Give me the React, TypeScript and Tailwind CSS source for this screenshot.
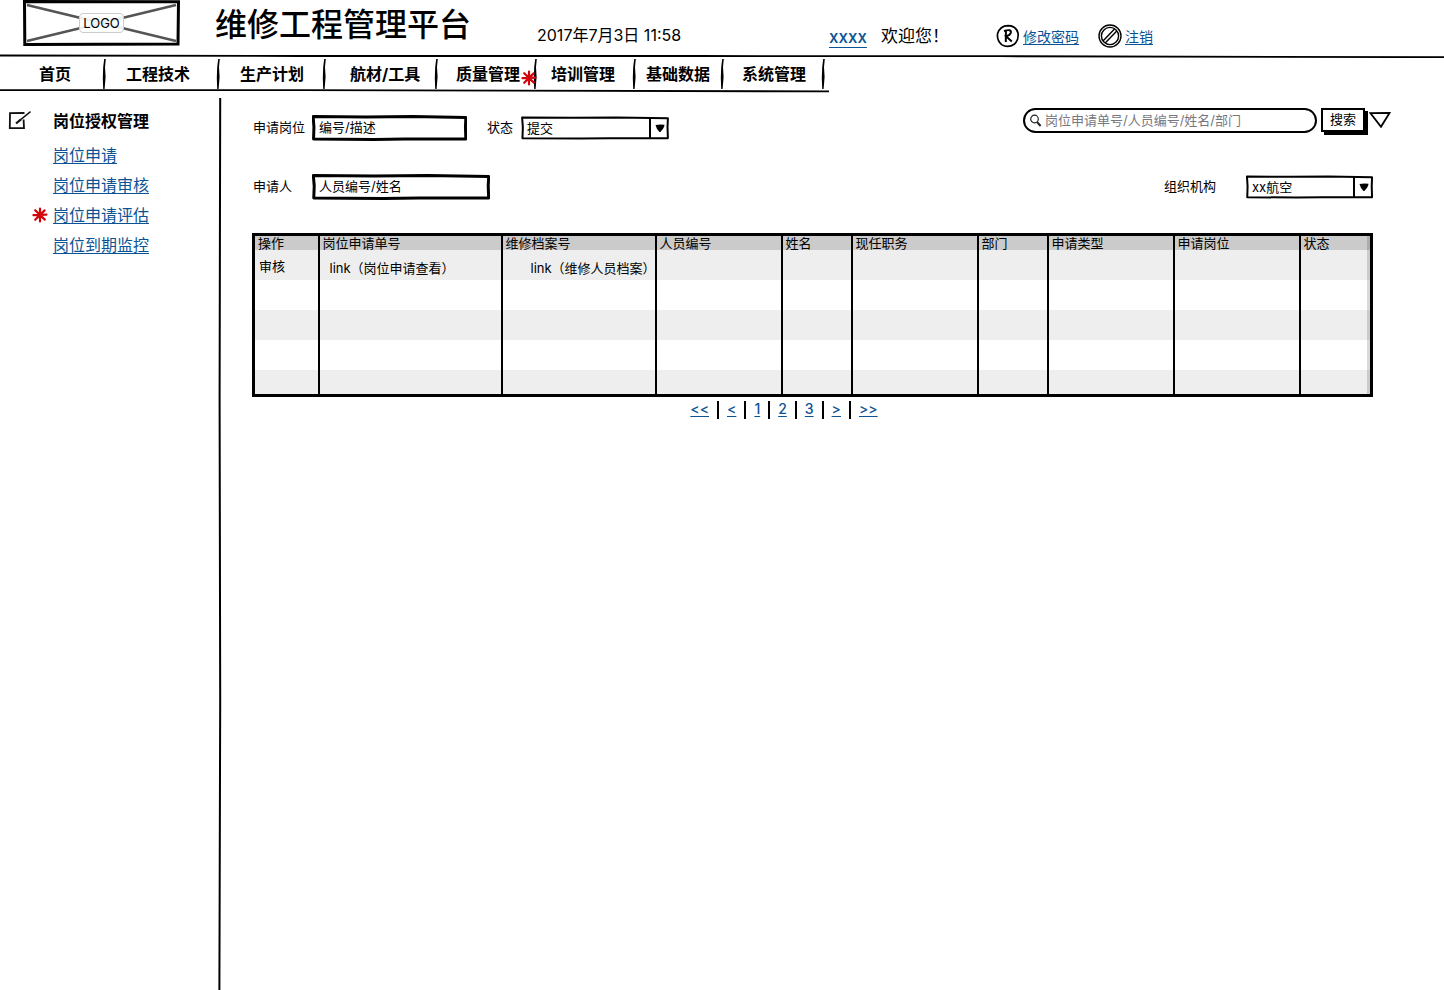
import React from "react";

const font = "font-['Inter','Noto_Sans_CJK_SC',sans-serif]";

function SketchFrame({ weight = 3 }: { weight?: number }) {
  return (
    <svg
      aria-hidden="true"
      className="pointer-events-none absolute inset-0 h-full w-full"
      viewBox="0 0 200 26"
      preserveAspectRatio="none"
      fill="none"
      stroke="#000"
      strokeWidth={weight}
      strokeLinejoin="round"
    >
      <path
        vectorEffect="non-scaling-stroke"
        d="M1.5 1.5 L70 2 L130 1.5 L198.5 2.5 L198 12 L198.5 24 L120 24 L80 24.5 L2 24 L2.5 12 Z"
      />
    </svg>
  );
}

function NavDivider() {
  return (
    <svg aria-hidden="true" className="h-8 w-1 shrink-0" viewBox="0 0 4 32">
      <path d="M2.2 1 L3.8 1 L3 9 L3.6 19 L2.6 31 L1.2 31 L0.8 20 L1.2 9 Z" fill="#000" />
    </svg>
  );
}

function Asterisk() {
  return (
    <svg
      aria-hidden="true"
      className="h-4 w-4"
      viewBox="0 0 16 16"
      stroke="#d0060c"
      strokeWidth="2.2"
      strokeLinecap="round"
    >
      <path d="M8 1.5 L8 14.5 M1.5 8.2 L14.5 7.6 M3.2 3.2 L12.8 12.6 M12.6 3.4 L3.2 12.8" />
    </svg>
  );
}

function Caret() {
  return (
    <svg aria-hidden="true" className="h-2 w-2.5" viewBox="0 0 10 8">
      <path d="M0.5 1 Q5 0 9.5 0.8 Q9.6 3.5 5.4 8 L4.4 8 Q1.4 5 0.5 1 Z" fill="#000" />
    </svg>
  );
}

const navItems = [
  { label: "首页", box: "w-[102px] pl-[39px]" },
  { label: "工程技术", box: "w-[110px] pl-5" },
  { label: "生产计划", box: "w-[102px] pl-5" },
  { label: "航材/工具", box: "w-[108px] pl-6" },
  { label: "质量管理", box: "w-[95px] pl-[18px]", flagged: true },
  { label: "培训管理", box: "w-[95px] pl-[14px]" },
  { label: "基础数据", box: "w-[84px] pl-[10px]" },
  { label: "系统管理", box: "w-[97px] pl-[18px]" },
];

const sideLinks = [
  { label: "岗位申请" },
  { label: "岗位申请审核" },
  { label: "岗位申请评估", flagged: true },
  { label: "岗位到期监控" },
];

const columns = [
  { label: "操作", width: "w-[65px]" },
  { label: "岗位申请单号", width: "w-[183px]" },
  { label: "维修档案号", width: "w-[154px]" },
  { label: "人员编号", width: "w-[126px]" },
  { label: "姓名", width: "w-[70px]" },
  { label: "现任职务", width: "w-[126px]" },
  { label: "部门", width: "w-[70px]" },
  { label: "申请类型", width: "w-[126px]" },
  { label: "申请岗位", width: "w-[126px]" },
  { label: "状态", width: "w-[72px]" },
];

const cell = "border-x-2 border-black p-0 last:shadow-[inset_-3px_0_0_rgba(0,0,0,0.15)]";

const emptyRows = [
  "h-[30px] bg-white",
  "h-[30px] bg-[#eeeeee]",
  "h-[30px] bg-white",
  "h-[25px] bg-[#eeeeee]",
];

const pages = ["<<", "<", "1", "2", "3", ">", ">>"];

function SelectBox({ id, value, box }: { id: string; value: string; box: string }) {
  return (
    <div className={`relative flex h-6 ${box}`}>
      <SketchFrame weight={2} />
      <select
        id={id}
        defaultValue={value}
        className="w-full appearance-none bg-transparent pl-[6px] text-[13px] leading-6 outline-none"
      >
        <option>{value}</option>
      </select>
      <span className="pointer-events-none absolute inset-y-0.5 right-0 flex w-5 items-center justify-center border-l-2 border-black">
        <Caret />
      </span>
    </div>
  );
}

function TextBox({ id, value, box }: { id: string; value: string; box: string }) {
  return (
    <div className={`relative flex h-[26px] ${box}`}>
      <SketchFrame />
      <input
        id={id}
        defaultValue={value}
        className="w-full bg-transparent pl-[7px] text-[13px] outline-none"
      />
    </div>
  );
}

function Header() {
  return (
    <header>
      <div className="flex h-[54px]">
        <div className="relative ml-[23px] flex h-[46px] w-[157px] shrink-0 items-center justify-center">
          <svg
            aria-hidden="true"
            className="absolute inset-0 h-full w-full"
            viewBox="0 0 157 46"
            fill="none"
          >
            <path d="M4 5 L153 41 M4 41 L153 5" stroke="#555" strokeWidth="2.6" />
            <path d="M1.5 1.5 L155.5 1.8 L155 44 L1.8 44.5 Z" stroke="#000" strokeWidth="3" />
          </svg>
          <span className="relative rounded border border-[#ccc] bg-white/90 px-[3px] text-[13px] leading-[18px]">
            LOGO
          </span>
        </div>
        <h1 className="ml-[35px] shrink-0 text-[32px] font-medium leading-[50px]">
          维修工程管理平台
        </h1>
        <time className="ml-[66px] w-[292px] shrink-0 pt-2 text-[16px] leading-[54px]">
          2017年7月3日 11:58
        </time>
        <div className="flex w-[118px] shrink-0 items-center gap-[14px] whitespace-nowrap pt-5">
          <a href="#user" className="text-[17px] font-medium leading-6 text-[#0b5394] underline underline-offset-4">
            xxxx
          </a>
          <span className="text-[17px]">欢迎您！</span>
        </div>
        <a href="#password" className="ml-[49px] flex shrink-0 items-center gap-[3px] pt-[18px] text-[14px] text-[#0b5394] underline underline-offset-2">
          <svg aria-hidden="true" className="h-6 w-6" viewBox="0 0 24 24" fill="none" stroke="#000" strokeWidth="1.7">
            <path d="M12 1.6 Q20 1.6 22 9 Q23 15.5 18.6 20 Q12 24.6 5.6 20.6 Q0.6 16 1.6 9.6 Q4 1.8 12 1.6 Z" />
            <path d="M9.8 18 L9.9 7 M8 7 Q15.6 4.6 14.8 8.8 Q14 11.6 10 12.2 L15.8 17.4" strokeWidth="2" />
          </svg>
          修改密码
        </a>
        <a href="#logout" className="ml-[19px] flex shrink-0 items-center gap-[3px] pt-[18px] text-[14px] text-[#0b5394] underline underline-offset-2">
          <svg aria-hidden="true" className="h-6 w-6" viewBox="0 0 24 24" fill="none" stroke="#000" strokeWidth="1.4">
            <circle cx="12" cy="12" r="11" />
            <circle cx="12" cy="12" r="8.6" />
            <path d="M5 17 L16.5 5 M7.2 19 L18.8 7" />
          </svg>
          注销
        </a>
      </div>
      <svg aria-hidden="true" className="block h-1 w-full" viewBox="0 0 1444 4" preserveAspectRatio="none">
        <path d="M0 1.5 L300 2 L700 2 L1000 2.2 L1444 3.2" fill="none" stroke="#000" strokeWidth="1.8" vectorEffect="non-scaling-stroke" />
      </svg>
    </header>
  );
}

export default function App() {
  return (
    <div className={`flex min-h-screen flex-col bg-white text-black ${font}`}>
      <Header />
      <nav className="w-fit">
        <ul className="flex h-[31px] items-center">
          {navItems.map((item) => (
            <li key={item.label} className="flex items-center">
              <a href="#nav" className={`relative whitespace-nowrap text-[16px] font-bold ${item.box}`}>
                {item.label}
                {item.flagged && (
                  <span className="absolute -right-1 top-2">
                    <Asterisk />
                  </span>
                )}
              </a>
              <NavDivider />
            </li>
          ))}
          <li aria-hidden="true" className="w-1" />
        </ul>
        <svg aria-hidden="true" className="block h-1 w-full" viewBox="0 0 829 4" preserveAspectRatio="none">
          <path d="M0 1.2 L300 1.2 L829 2.4" fill="none" stroke="#000" strokeWidth="1.8" vectorEffect="non-scaling-stroke" />
        </svg>
      </nav>
      <div className="flex flex-1">
        <aside className="w-[218px] shrink-0 pt-4">
          <h2 className="flex h-6 items-center text-[16px] font-bold">
            <svg aria-hidden="true" className="ml-2 mr-[21px] h-6 w-6" viewBox="0 0 24 24" fill="none" stroke="#111" strokeWidth="1.8">
              <path d="M16.5 4 L2 4.2 L1.8 19.2 L16 19 L15.6 10.5" />
              <path d="M8 14.5 L13 10.4" strokeWidth="2.2" />
              <path d="M13 10.4 L22.5 2.6" strokeWidth="1.4" />
            </svg>
            岗位授权管理
          </h2>
          <ul className="mt-[7px]">
            {sideLinks.map((link) => (
              <li key={link.label} className="flex h-[30px] items-center">
                <span className="ml-8 mr-[5px] h-4 w-4">{link.flagged && <Asterisk />}</span>
                <a href="#side" className="text-[16px] text-[#0b5394] underline underline-offset-2">
                  {link.label}
                </a>
              </li>
            ))}
          </ul>
        </aside>
        <svg aria-hidden="true" className="mt-[5px] w-1 shrink-0" viewBox="0 0 4 890" preserveAspectRatio="none">
          <path d="M2.2 0 L1.6 300 L2.2 600 L1.4 890" fill="none" stroke="#000" strokeWidth="2" vectorEffect="non-scaling-stroke" />
        </svg>
        <main className="min-w-0 flex-1 pl-[30px] pr-[71px] text-[13px]">
          <form onSubmit={(event) => event.preventDefault()}>
            <div className="flex pt-3">
              <div className="flex h-[46px] items-center">
                <label htmlFor="post" className="w-[60px] pl-px">申请岗位</label>
                <TextBox id="post" value="编号/描述" box="w-[155px]" />
                <label htmlFor="status" className="ml-5 w-[34px]">状态</label>
                <SelectBox id="status" value="提交" box="w-[148px]" />
              </div>
              <div className="-mr-[18px] ml-auto flex h-[30px] items-center">
                <div className="relative h-[25px] w-[294px] rounded-full border-2 border-black">
                  <svg aria-hidden="true" className="absolute left-1 top-1 h-3.5 w-3.5" viewBox="0 0 14 14" fill="none" stroke="#222">
                    <circle cx="5.5" cy="5" r="3.8" strokeWidth="1.2" />
                    <path d="M8 8 L11.6 12" strokeWidth="2" />
                  </svg>
                  <input
                    aria-label="搜索"
                    placeholder="岗位申请单号/人员编号/姓名/部门"
                    className="block h-full w-full bg-transparent pl-5 outline-none placeholder:text-[#77777f]"
                  />
                </div>
                <button className="ml-1 h-6 w-[44px] border-2 border-black bg-white shadow-[3px_3px_0_#000]">
                  搜索
                </button>
                <button aria-label="展开" className="ml-1">
                  <svg aria-hidden="true" className="h-4 w-[22px]" viewBox="0 0 22 16">
                    <path d="M1.5 1.2 L20.5 1 L12 14.8 Z" fill="none" stroke="#000" strokeWidth="1.8" />
                  </svg>
                </button>
              </div>
            </div>
            <div className="mt-[14px] flex h-[44px] items-center">
              <label htmlFor="applicant" className="w-[60px] pl-px">申请人</label>
              <TextBox id="applicant" value="人员编号/姓名" box="w-[178px]" />
              <label htmlFor="org" className="ml-auto w-[82px]">组织机构</label>
              <SelectBox id="org" value="xx航空" box="w-[127px]" />
            </div>
          </form>
          <div className="mt-6 pr-0.5">
            <table className="w-full table-fixed border-collapse border-[3px] border-black text-left">
              <thead>
                <tr className="h-[14px] bg-[#cbcbcb]">
                  {columns.map((column) => (
                    <th key={column.label} className={`${cell} pl-[3px] font-normal leading-[14px] ${column.width}`}>
                      {column.label}
                    </th>
                  ))}
                </tr>
              </thead>
              <tbody>
                <tr className="h-[30px] bg-[#eeeeee]">
                  <td className={`${cell} pl-1 pt-1`}>审核</td>
                  <td className={`${cell} whitespace-nowrap pl-[10px] pt-2`}>link（岗位申请查看）</td>
                  <td className={`${cell} whitespace-nowrap pl-7 pt-2`}>link（维修人员档案）</td>
                  {columns.slice(3).map((column) => (
                    <td key={column.label} className={cell} />
                  ))}
                </tr>
                {emptyRows.map((row, index) => (
                  <tr key={index} className={row}>
                    {columns.map((column) => (
                      <td key={column.label} className={cell} />
                    ))}
                  </tr>
                ))}
              </tbody>
            </table>
          </div>
          <nav aria-label="分页" className="mt-1 flex justify-center pr-[57px]">
            {pages.map((page, index) => (
              <a
                key={page}
                href="#page"
                className="flex items-center text-[14px] font-medium leading-4 text-[#0b5394]"
              >
                {index > 0 && <span className="mx-2 h-[18px] w-0.5 bg-black" />}
                <span className="pb-0.5 underline underline-offset-2">{page}</span>
              </a>
            ))}
          </nav>
        </main>
      </div>
    </div>
  );
}
